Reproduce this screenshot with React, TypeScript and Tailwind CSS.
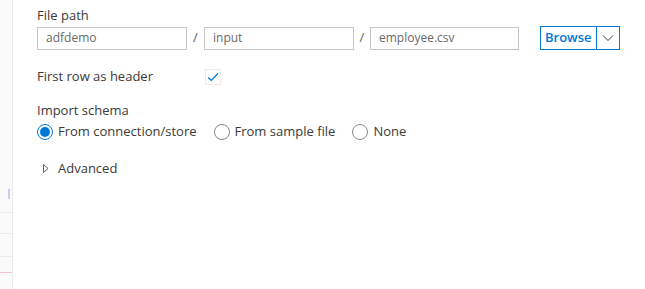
import React from 'react';

const font = { fontFamily: '"Segoe UI", "Open Sans", "Noto Sans", sans-serif' };

function TextBox({ value, w }: { value: string; w: string }) {
  return (
    <div className={`${w} h-[23px] border border-[#c8c6c4] flex items-center px-[8px] text-[12px] text-[#6b6967]`}>
      {value}
    </div>
  );
}

function Radio({ label, checked }: { label: string; checked?: boolean }) {
  return (
    <label className="flex items-center gap-[5px]">
      <span
        className={`w-[16px] h-[16px] rounded-full border flex items-center justify-center ${
          checked ? 'border-[#0078d4]' : 'border-[#8a8886]'
        }`}
      >
        {checked && <span className="w-[10px] h-[10px] rounded-full bg-[#0078d4]" />}
      </span>
      <span>{label}</span>
    </label>
  );
}

export default function App() {
  return (
    <div className="w-[645px] h-[289px] bg-white flex overflow-hidden text-[13px] text-[#3b3a39]" style={font}>
      {/* left gutter of the neighbouring pane */}
      <div className="w-[13px] shrink-0 bg-[#fafafa] border-r border-[#ececec] flex flex-col">
        <div className="h-[189px]" />
        <div className="ml-[8px] w-[2px] h-[10px] bg-[#c9ccf0]" />
        <div className="h-[13px]" />
        <div className="h-px bg-[#ececec]" />
        <div className="h-[20px]" />
        <div className="h-px bg-[#ececec]" />
        <div className="h-[22px]" />
        <div className="h-px bg-[#ececec]" />
        <div className="h-[15px]" />
        <div className="h-px bg-[#f1c6cc]" />
      </div>

      <div className="flex-1 pl-[24px] pt-[6px]">
        <div className="leading-[18px]">File path</div>
        <div className="flex items-center mt-[2px]">
          <TextBox value="adfdemo" w="w-[150px]" />
          <span className="w-[17px] text-center text-[#605e5c]">/</span>
          <TextBox value="input" w="w-[150px]" />
          <span className="w-[16px] text-center text-[#605e5c]">/</span>
          <TextBox value="employee.csv" w="w-[149px]" />
          <div className="ml-[21px] flex h-[24px] border border-[#0078d4]">
            <span className="px-[4px] flex items-center font-semibold text-[#0078d4] text-[13px]">Browse</span>
            <span className="w-[23px] border-l border-[#0078d4] flex items-center justify-center">
              <svg width="12" height="8" viewBox="0 0 12 8" fill="none">
                <path d="M1 1.5 L6 6.5 L11 1.5" stroke="#323130" strokeWidth="1" />
              </svg>
            </span>
          </div>
        </div>

        <div className="flex items-center mt-[18px] h-[18px]">
          <span className="w-[168px]">First row as header</span>
          <span className="w-[16px] h-[16px] border border-[#edebe9] flex items-center justify-center">
            <svg width="12" height="10" viewBox="0 0 12 10" fill="none">
              <path d="M1 5.5 L4.2 8.5 L11 1.5" stroke="#0078d4" strokeWidth="1.2" />
            </svg>
          </span>
        </div>

        <div className="mt-[15px] leading-[18px]">Import schema</div>
        <div className="flex items-center gap-[17px] mt-[3px]">
          <Radio label="From connection/store" checked />
          <Radio label="From sample file" />
          <Radio label="None" />
        </div>

        <div className="flex items-center mt-[17px] ml-[6px] gap-[9px]">
          <svg width="6" height="9" viewBox="0 0 6 9" fill="none">
            <path d="M0.5 0.5 L5 4.5 L0.5 8.5 Z" stroke="#605e5c" strokeWidth="1" />
          </svg>
          <span>Advanced</span>
        </div>
      </div>
    </div>
  );
}
